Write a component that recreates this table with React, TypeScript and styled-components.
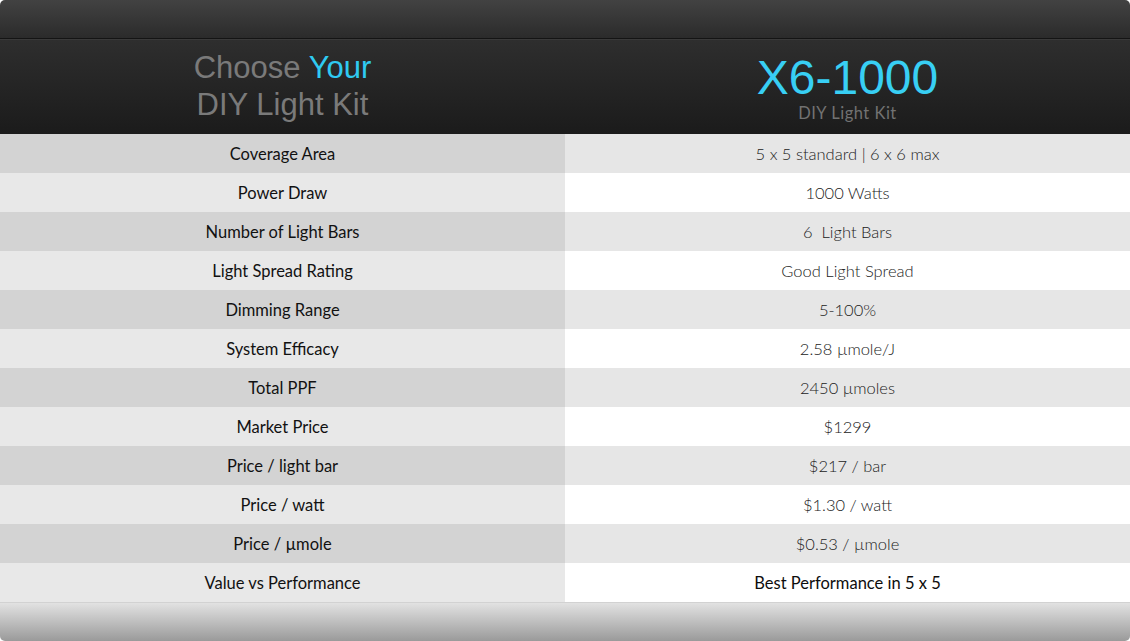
import { Fragment } from "react";
import styled, { createGlobalStyle } from "styled-components";

const GlobalStyle = createGlobalStyle`
  html, body {
    margin: 0;
    padding: 0;
    background: #ffffff;
  }
`;

const Frame = styled.div`
  width: 1130px;
  height: 641px;
  border-radius: 5px;
  overflow: hidden;
  display: flex;
  flex-direction: column;
`;

const TopBar = styled.div`
  height: 38px;
  background: linear-gradient(#424242, #2b2b2b);
  border-bottom: 1px solid #141414;
`;

const Header = styled.div`
  height: 95px;
  display: grid;
  grid-template-columns: 565px 565px;
  background: linear-gradient(#2e2e2e, #1b1b1b);
  border-top: 1px solid #3a3a3a;
  box-sizing: border-box;
`;

const HeaderCell = styled.div`
  display: flex;
  flex-direction: column;
  align-items: center;
  justify-content: center;
`;

const ChooseTitle = styled.div`
  font-family: "Liberation Sans", Arial, sans-serif;
  font-size: 31px;
  line-height: 37px;
  color: #7a7a7a;
  text-align: center;
  margin-top: -2px;
`;

const Accent = styled.span`
  color: #2fcaf2;
`;

const ModelName = styled.div`
  font-family: "Liberation Sans", Arial, sans-serif;
  font-size: 48px;
  line-height: 50px;
  color: #38cff4;
  margin-top: 2px;
`;

const ModelSub = styled.div`
  font-family: Lato, "Open Sans", sans-serif;
  font-size: 16.5px;
  letter-spacing: 0.5px;
  color: #727272;
  line-height: 20px;
`;

const Table = styled.div`
  display: grid;
  grid-template-columns: 565px 565px;
`;

const LabelCell = styled.div<{ $odd: boolean }>`
  height: 39px;
  display: flex;
  align-items: center;
  justify-content: center;
  background: ${(p) => (p.$odd ? "#d3d3d3" : "#e8e8e8")};
  font-family: Lato, "Open Sans", sans-serif;
  font-size: 16.5px;
  font-weight: 400;
  color: #111111;
`;

const ValueCell = styled.div<{ $odd: boolean; $strong?: boolean }>`
  height: 39px;
  display: flex;
  align-items: center;
  justify-content: center;
  background: ${(p) => (p.$odd ? "#e6e6e6" : "#ffffff")};
  font-family: Lato, "Open Sans", sans-serif;
  font-size: 16.5px;
  font-weight: ${(p) => (p.$strong ? 400 : 300)};
  color: ${(p) => (p.$strong ? "#0d0d0d" : "#222222")};
  white-space: pre;
`;

const BottomBar = styled.div`
  flex: 1;
  border-top: 1px solid #d2d2d2;
  background: linear-gradient(#e2e2e2, #9a9a9a);
`;

const rows: [string, string][] = [
  ["Coverage Area", "5 x 5 standard | 6 x 6 max"],
  ["Power Draw", "1000 Watts"],
  ["Number of Light Bars", "6  Light Bars"],
  ["Light Spread Rating", "Good Light Spread"],
  ["Dimming Range", "5-100%"],
  ["System Efficacy", "2.58 µmole/J"],
  ["Total PPF", "2450 µmoles"],
  ["Market Price", "$1299"],
  ["Price / light bar", "$217 / bar"],
  ["Price / watt", "$1.30 / watt"],
  ["Price / µmole", "$0.53 / µmole"],
  ["Value vs Performance", "Best Performance in 5 x 5"],
];

export default function App() {
  return (
    <>
      <GlobalStyle />
      <Frame>
        <TopBar />
        <Header>
          <HeaderCell>
            <ChooseTitle>
              Choose <Accent>Your</Accent>
              <br />
              DIY Light Kit
            </ChooseTitle>
          </HeaderCell>
          <HeaderCell>
            <ModelName>X6-1000</ModelName>
            <ModelSub>DIY Light Kit</ModelSub>
          </HeaderCell>
        </Header>
        <Table>
          {rows.map(([label, value], i) => (
            <Fragment key={label}>
              <LabelCell $odd={i % 2 === 0}>{label}</LabelCell>
              <ValueCell $odd={i % 2 === 0} $strong={i === rows.length - 1}>
                {value}
              </ValueCell>
            </Fragment>
          ))}
        </Table>
        <BottomBar />
      </Frame>
    </>
  );
}
